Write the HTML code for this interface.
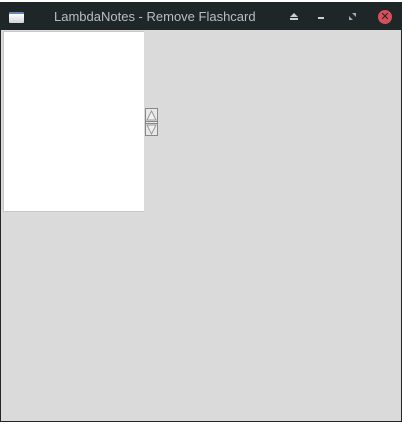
<!DOCTYPE html>
<html><head><style>
html,body{margin:0;padding:0;width:402px;height:425px;background:#fff;overflow:hidden;font-family:"Liberation Sans","DejaVu Sans",sans-serif}
.win{position:absolute;left:0;top:2px;width:400px;height:418px;background:#dadada;border:1px solid #1f2628}
.tb{position:absolute;left:0;top:0;width:400px;height:27px;background:#1f2628}
.title{position:absolute;left:53px;top:6px;color:#b8bec4;font-size:13px;font-family:"Liberation Sans",sans-serif;white-space:nowrap}
.ic{position:absolute;left:8px;top:9px;width:15px;height:11px;background:linear-gradient(#fff,#cfd3d8);border-top:2px solid #6a86b8;box-sizing:border-box;border-radius:1px}
.box{position:absolute;left:2px;top:28px;width:141px;height:181px;background:#fff;border:1px solid #c8c8c8;border-right:none;box-sizing:border-box}
.close{position:absolute;left:377px;top:7px;width:14px;height:14px;border-radius:50%;background:#d6505a;color:#1f2628;font-size:11px;font-weight:bold;text-align:center;line-height:14px}
</style></head><body>
<div class="win">
 <div class="tb">
  <div class="ic"></div>
  <div class="title">LambdaNotes - Remove Flashcard</div>
  <svg style="position:absolute;left:288px;top:9px" width="10" height="9"><polygon points="5,1 9,5 1,5" fill="#c8d0d0"/><rect x="1" y="6" width="8" height="2" fill="#c8d0d0"/></svg>
  <div style="position:absolute;left:317px;top:14px;width:6px;height:2px;background:#c8d0d0"></div>
  <svg style="position:absolute;left:348px;top:10px" width="7" height="7"><polygon points="3,0 7,0 7,4" fill="#aab"/><polygon points="0,3 0,7 4,7" fill="#aab"/></svg>
  <div class="close">✕</div>
 </div>
 <div class="box"></div>
 <svg style="position:absolute;left:144px;top:105px" width="13" height="28">
  <rect x="0.5" y="0.5" width="12" height="27" fill="#e8e8e8" stroke="#888"/>
  <line x1="1" y1="13.5" x2="12" y2="13.5" stroke="#888"/>
  <line x1="1" y1="15.5" x2="12" y2="15.5" stroke="#888"/>
  <polygon points="6.5,3 11,12 2,12" fill="#f0f0f0" stroke="#999"/>
  <polygon points="2,17 11,17 6.5,26" fill="#f0f0f0" stroke="#999"/>
 </svg>
</div>
</body></html>
